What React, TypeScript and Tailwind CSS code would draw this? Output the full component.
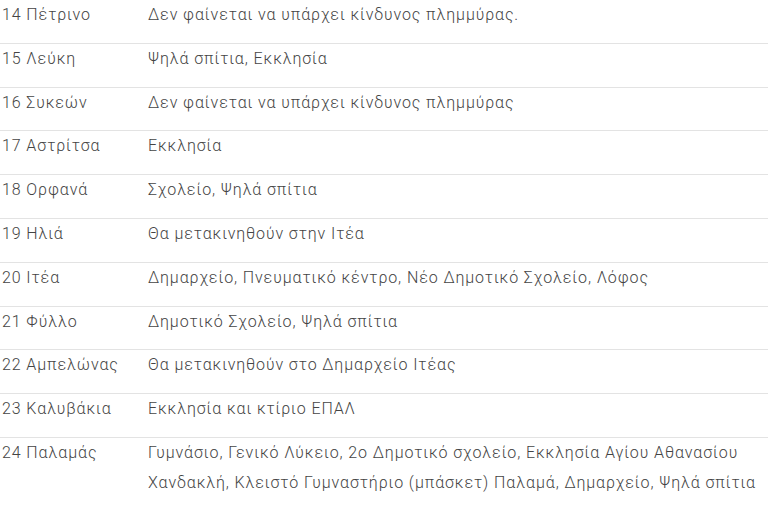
const rows: [string, string][] = [
  ["14 Πέτρινο", "Δεν φαίνεται να υπάρχει κίνδυνος πλημμύρας."],
  ["15 Λεύκη", "Ψηλά σπίτια, Εκκλησία"],
  ["16 Συκεών", "Δεν φαίνεται να υπάρχει κίνδυνος πλημμύρας"],
  ["17 Αστρίτσα", "Εκκλησία"],
  ["18 Ορφανά", "Σχολείο, Ψηλά σπίτια"],
  ["19 Ηλιά", "Θα μετακινηθούν στην Ιτέα"],
  ["20 Ιτέα", "Δημαρχείο, Πνευματικό κέντρο, Νέο Δημοτικό Σχολείο, Λόφος"],
  ["21 Φύλλο", "Δημοτικό Σχολείο, Ψηλά σπίτια"],
  ["22 Αμπελώνας", "Θα μετακινηθούν στο Δημαρχείο Ιτέας"],
  ["23 Καλυβάκια", "Εκκλησία και κτίριο ΕΠΑΛ"],
  [
    "24 Παλαμάς",
    "Γυμνάσιο, Γενικό Λύκειο, 2ο Δημοτικό σχολείο, Εκκλησία Αγίου Αθανασίου Χανδακλή, Κλειστό Γυμναστήριο (μπάσκετ) Παλαμά, Δημαρχείο, Ψηλά σπίτια",
  ],
];

export default function App() {
  return (
    <div className="w-[783px] h-[507px] overflow-hidden bg-white font-['Roboto',sans-serif] font-light text-[16px] leading-[30px] tracking-[0.9px] text-[#444]">
      <table className="w-[768px] border-collapse">
        <tbody>
          {rows.map(([place, shelter]) => (
            <tr key={place} className="border-b border-[#e3e3e3]">
              <td className="w-[148px] align-top pl-[2px] pb-[12.8px]">{place}</td>
              <td className="align-top pb-[12.8px] pr-[6px]">{shelter}</td>
            </tr>
          ))}
        </tbody>
      </table>
    </div>
  );
}
